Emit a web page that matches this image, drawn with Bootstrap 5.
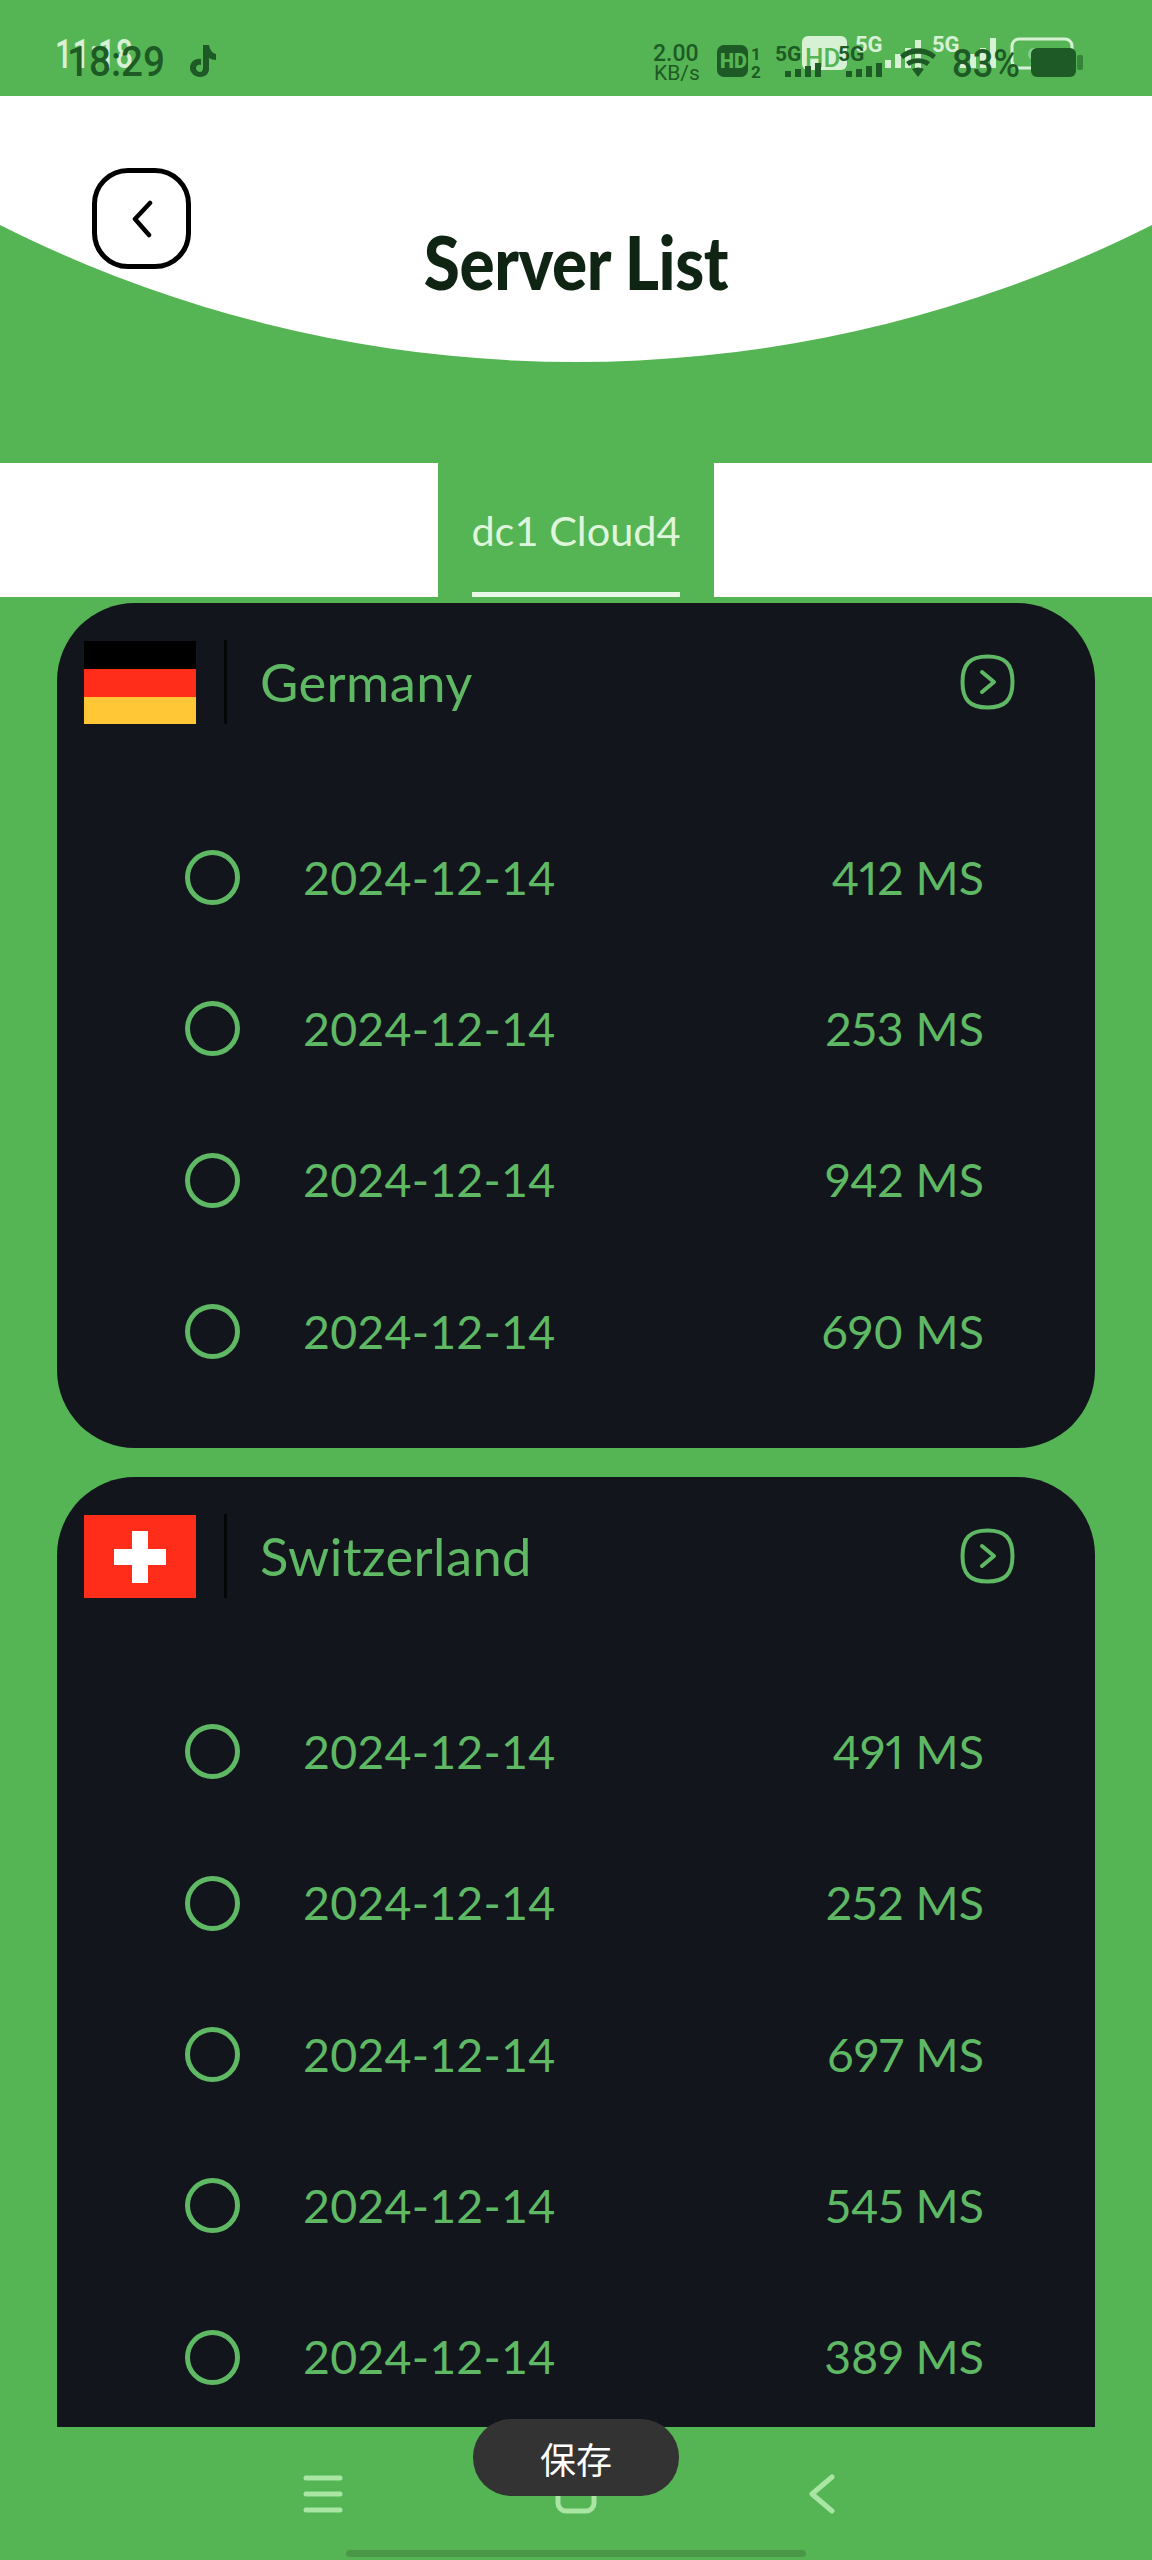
<!DOCTYPE html>
<html lang="en">
<head>
<meta charset="utf-8">
<title>Server List</title>
<link rel="stylesheet" href="https://cdn.jsdelivr.net/npm/bootstrap@5.3.0/dist/css/bootstrap.min.css">
<style>
  :root { --leaf: #55b554; --ink: #12151c; --mint: #5fb863; }
  html, body { margin: 0; background: var(--leaf); }
  .shell { width: 1152px; height: 2560px; overflow: hidden; background: var(--leaf); display: flex; flex-direction: column; font-family: Lato, "Liberation Sans", sans-serif; }
  .status-strip { height: 96px; flex: none; }
  .status-strip svg { display: block; }
  .status-strip text { font-family: Roboto, sans-serif; }
  .hero { height: 266px; flex: none; background: #fff; clip-path: circle(1279px at 576px -1013px); display: grid; grid-template-columns: 1fr auto 1fr; }
  .back-btn { width: 99px; height: 101px; margin: 72px 0 0 92px; padding: 0; border: 5px solid #000; border-radius: 36px; background: #fff; display: flex; align-items: center; justify-content: center; }
  .hero-title { margin: 123px 0 0; font-family: Lato, sans-serif; font-weight: 900; font-size: 75px; line-height: 84px; color: #0f2412; white-space: nowrap; transform: scaleX(.875); letter-spacing: -.5px; }
  .tab-strip { height: 134px; flex: none; margin-top: 101px; }
  .tab-on { width: 276px; background: var(--leaf); color: #dff5dc; font-size: 41.500px; padding: 0 34px; display: flex; flex-direction: column; }
  .tab-on span { flex: 1; display: flex; align-items: center; justify-content: center; white-space: nowrap; padding-top: 6px; }
  .tab-on i { display: block; height: 5px; background: #eaf8e8; }
  .scroll-area { flex: 1; min-height: 0; overflow: hidden; padding: 6px 57px 0; }
  .server-card { background: var(--ink); border: 0; border-radius: 78px; padding: 37px 0 41px; margin-bottom: 29px; color: var(--mint); }
  .server-card.runs-on { padding-bottom: 200px; }
  .flag { width: 112px; height: 83px; margin-left: 27px; flex: none; display: block; }
  .flag-rule { width: 3px; height: 84px; background: #050608; margin: 0 33px 0 28px; flex: none; }
  .country { font-size: 52.500px; letter-spacing: .4px; line-height: 84px; flex: 1; }
  .go { margin-right: 80px; flex: none; display: block; }
  .probe-list { margin-top: 78px; }
  .probe { height: 151.3px; padding: 0 111px 0 128px; font-size: 46.500px; font-weight: 400; font-variant-numeric: proportional-nums; }
  .probe-date { flex-grow: 1; font-variant-numeric: tabular-nums; letter-spacing: .2px; }
  .dot { width: 55px; height: 55px; border: 5px solid var(--mint); border-radius: 50%; margin-right: 63px; flex: none; }
  .bottom-bar { height: 133px; flex: none; position: relative; background: var(--leaf); display: flex; flex-direction: column; align-items: center; }
  .bottom-icons { width: 532px; margin: 47px 0 0 -15px; height: 40px; }
  .gesture { width: 460px; height: 7px; margin-top: 36px; border-radius: 4px; background: #4a9748; }
  .toast-pill { position: absolute; left: 473px; top: -8px; width: 206px; height: 77px; border-radius: 38px; background: #333; color: #fff; font-family: "Noto Sans CJK SC", sans-serif; font-size: 36px; display: flex; align-items: center; justify-content: center; }
</style>
</head>
<body>
<div class="shell">

  <!-- status bar: two overlapping sets of indicators -->
  <div class="status-strip">
    <svg width="1152" height="96" viewBox="0 0 1152 96">
      <g fill="#e4f8e2" opacity=".9">
        <text x="55" y="68" font-size="41" font-weight="500" textLength="78" lengthAdjust="spacingAndGlyphs">11:18</text>
        <rect x="802" y="36" width="45" height="34" rx="6"/>
        <text x="855" y="52" font-size="22" font-weight="700">5G</text>
        <text x="932" y="52" font-size="22" font-weight="700">5G</text>
        <path d="M885 68h6v-8h-6zM895 68h6v-14h-6zM905 68h6v-20h-6zM915 68h6v-28h-6z"/>
        <path d="M960 68h6v-8h-6zM970 68h6v-14h-6zM980 68h6v-20h-6zM990 68h6v-30h-6z"/>
        <rect x="1012" y="39" width="60" height="29" rx="7" fill="none" stroke="#e4f8e2" stroke-width="3"/>
        <text x="1027" y="65" font-size="24" font-weight="700" fill="#8fd08f">98</text>
      </g>
      <text x="805" y="67" font-size="26" font-weight="500" fill="#55b554">HD</text>
      <g fill="#1e5a25">
        <text x="67" y="76" font-size="43" font-weight="500" textLength="98" lengthAdjust="spacingAndGlyphs">18:29</text>
        <path d="M203 45h6c1 5 3 8 7 9v6c-3 0-5-1-7-2v11c0 5-4 8-9 8s-10-4-10-9c0-6 5-10 11-9v6c-3-1-5 1-5 3s2 4 4 4 3-2 3-4z"/>
        <text x="653" y="61" font-size="23" font-weight="500">2.00</text>
        <text x="654" y="80" font-size="21" font-weight="400">KB/s</text>
        <rect x="717" y="45" width="31" height="32" rx="7"/>
        <text x="720" y="68" font-size="20" font-weight="900" fill="#55b554">HD</text>
        <text x="751" y="60" font-size="17" font-weight="700">1</text>
        <text x="751" y="78" font-size="17" font-weight="700">2</text>
        <text x="775" y="61" font-size="21" font-weight="700">5G</text>
        <path d="M785 77h6v-6h-6zM795 77h6v-8h-6zM805 77h6v-11h-6zM815 77h6v-14h-6z"/>
        <text x="838" y="61" font-size="21" font-weight="700">5G</text>
        <path d="M846 77h6v-6h-6zM856 77h6v-8h-6zM866 77h6v-11h-6zM876 77h6v-14h-6z"/>
        <path d="M900 55c10-9 26-9 36 0l-3 4c-8-7-22-7-30 0zM906 62c7-5 17-5 24 0l-3 4c-5-4-13-4-18 0zM912 69c4-2 8-2 12 0l-6 8z"/>
        <text x="952" y="77" font-size="38" font-weight="500" textLength="68" lengthAdjust="spacingAndGlyphs">83%</text>
        <rect x="1031" y="48" width="45" height="29" rx="6"/>
        <rect x="1077" y="55" width="6" height="15" rx="2" opacity=".55"/>
      </g>
    </svg>
  </div>

  <header class="hero">
    <button type="button" class="btn back-btn" aria-label="Back">
      <svg width="24" height="38" viewBox="0 0 24 38"><path d="M20 3 5 19l14 16" fill="none" stroke="#000" stroke-width="4.500" stroke-linecap="round" stroke-linejoin="round"/></svg>
    </button>
    <h1 class="hero-title">Server List</h1>
    <div></div>
  </header>

  <div class="tab-strip bg-white d-flex justify-content-center">
    <div class="tab-on"><span>dc1 Cloud4</span><i></i></div>
  </div>

  <main class="scroll-area">

    <section class="card server-card">
      <div class="d-flex align-items-center">
        <svg class="flag" viewBox="0 0 112 83"><rect width="112" height="28" fill="#000"/><rect y="28" width="112" height="28" fill="#ff2d1a"/><rect y="56" width="112" height="27" fill="#ffc736"/></svg>
        <span class="flag-rule"></span>
        <span class="country">Germany</span>
        <svg class="go" width="55" height="56" viewBox="0 0 55 56"><path d="M27.500 2.500C45 2.500 52.500 10 52.500 28S45 53.500 27.500 53.500 2.500 46 2.500 28 10 2.500 27.500 2.500Z" fill="none" stroke="#5fb863" stroke-width="4"/><path d="M22 18l12 10-12 10" fill="none" stroke="#5fb863" stroke-width="4" stroke-linecap="round" stroke-linejoin="round"/></svg>
      </div>
      <div class="probe-list">
        <div class="probe d-flex align-items-center"><span class="dot"></span><span class="probe-date">2024-12-14</span><span>412 MS</span></div>
        <div class="probe d-flex align-items-center"><span class="dot"></span><span class="probe-date">2024-12-14</span><span>253 MS</span></div>
        <div class="probe d-flex align-items-center"><span class="dot"></span><span class="probe-date">2024-12-14</span><span>942 MS</span></div>
        <div class="probe d-flex align-items-center"><span class="dot"></span><span class="probe-date">2024-12-14</span><span>690 MS</span></div>
      </div>
    </section>

    <section class="card server-card runs-on">
      <div class="d-flex align-items-center">
        <svg class="flag" viewBox="0 0 112 83"><rect width="112" height="83" fill="#ff2d1a"/><path d="M48 16h16v18h18v16H64v18H48V50H30V34h18z" fill="#fff"/></svg>
        <span class="flag-rule"></span>
        <span class="country">Switzerland</span>
        <svg class="go" width="55" height="56" viewBox="0 0 55 56"><path d="M27.500 2.500C45 2.500 52.500 10 52.500 28S45 53.500 27.500 53.500 2.500 46 2.500 28 10 2.500 27.500 2.500Z" fill="none" stroke="#5fb863" stroke-width="4"/><path d="M22 18l12 10-12 10" fill="none" stroke="#5fb863" stroke-width="4" stroke-linecap="round" stroke-linejoin="round"/></svg>
      </div>
      <div class="probe-list">
        <div class="probe d-flex align-items-center"><span class="dot"></span><span class="probe-date">2024-12-14</span><span>491 MS</span></div>
        <div class="probe d-flex align-items-center"><span class="dot"></span><span class="probe-date">2024-12-14</span><span>252 MS</span></div>
        <div class="probe d-flex align-items-center"><span class="dot"></span><span class="probe-date">2024-12-14</span><span>697 MS</span></div>
        <div class="probe d-flex align-items-center"><span class="dot"></span><span class="probe-date">2024-12-14</span><span>545 MS</span></div>
        <div class="probe d-flex align-items-center"><span class="dot"></span><span class="probe-date">2024-12-14</span><span>389 MS</span></div>
      </div>
    </section>

  </main>

  <footer class="bottom-bar">
    <div class="bottom-icons d-flex justify-content-between align-items-center">
      <svg width="40" height="40" viewBox="0 0 40 40"><path d="M3 4h34M3 20h34M3 36h34" stroke="#a9e6a4" stroke-width="5" stroke-linecap="round"/></svg>
      <svg width="42" height="40" viewBox="0 0 42 40"><rect x="3" y="3" width="36" height="34" rx="8" fill="none" stroke="#a9e6a4" stroke-width="5"/></svg>
      <svg width="26" height="40" viewBox="0 0 26 40"><path d="M23 3 3 20l20 17" fill="none" stroke="#a9e6a4" stroke-width="5" stroke-linecap="round" stroke-linejoin="round"/></svg>
    </div>
    <div class="gesture"></div>
    <div class="toast-pill">保存</div>
  </footer>

</div>
<script src="https://cdn.jsdelivr.net/npm/bootstrap@5.3.0/dist/js/bootstrap.bundle.min.js"></script>
</body>
</html>
